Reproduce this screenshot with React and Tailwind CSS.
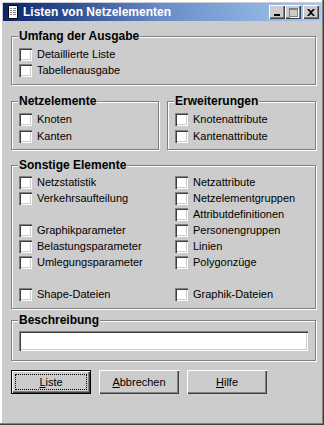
import React from 'react';

const font = { fontFamily: '"Liberation Sans", Arial, sans-serif' };

const Check = ({ label }) => (
  <div className="flex items-start h-full">
    <div className="w-[13px] h-[13px] shrink-0 bg-white shadow-[inset_1px_1px_0_#808080,inset_2px_2px_0_#404040,inset_-1px_-1px_0_#ffffff,inset_-2px_-2px_0_#cccccc]" />
    {label && <span className="ml-[5px] text-[11px] leading-[13px] text-black whitespace-nowrap">{label}</span>}
  </div>
);

const Group = ({ title, className = '', children }) => (
  <div className={`relative border border-[#808080] shadow-[inset_1px_1px_0_#fff,1px_1px_0_#fff] ${className}`}>
    <span className="absolute top-[-7px] left-[6px] px-[1px] bg-[#cccccc] text-[12px] leading-[12px] font-bold text-black whitespace-nowrap">
      {title}
    </span>
    {children}
  </div>
);

const Button = ({ children, isDefault }) => (
  <div className={`w-[80px] h-[24px] ${isDefault ? 'border border-black' : ''}`}>
    <div className="relative w-full h-full flex items-center justify-center text-[11px] text-black shadow-[inset_1px_1px_0_#fff,inset_-1px_-1px_0_#404040,inset_-2px_-2px_0_#808080]">
      {isDefault && <div className="absolute inset-[3px] border border-dotted border-black" />}
      <span>{children}</span>
    </div>
  </div>
);

const TitleButton = ({ children, className = '' }) => (
  <div className={`w-[16px] h-[14px] bg-[#cccccc] flex items-center justify-center shadow-[inset_1px_1px_0_#fff,inset_-1px_-1px_0_#404040,inset_-2px_-2px_0_#808080] ${className}`}>
    {children}
  </div>
);

const leftItems = [
  'Netzstatistik',
  'Verkehrsaufteilung',
  null,
  'Graphikparameter',
  'Belastungsparameter',
  'Umlegungsparameter',
  'empty',
  'Shape-Dateien',
];

const rightItems = [
  'Netzattribute',
  'Netzelementgruppen',
  'Attributdefinitionen',
  'Personengruppen',
  'Linien',
  'Polygonzüge',
  'empty',
  'Graphik-Dateien',
];

export default function App() {
  return (
    <div style={font} className="w-[324px] h-[425px] bg-[#cccccc] p-[3px] shadow-[inset_-1px_-1px_0_#404040,inset_-2px_-2px_0_#808080,inset_2px_2px_0_#fff] overflow-hidden">
      {/* title bar */}
      <div className="h-[18px] flex items-center bg-gradient-to-r from-[#0a246a] via-[#6a8cc8] to-[#a6caf0] pl-[5px] pr-[2px]">
        <svg width="10" height="14" viewBox="0 0 10 14" className="shrink-0">
          <rect x="0.5" y="0.5" width="9" height="13" fill="#fff" stroke="#000" />
          <rect x="2" y="3" width="2" height="1" fill="#808080" />
          <rect x="5" y="3" width="3" height="1" fill="#808080" />
          <rect x="2" y="5" width="2" height="1" fill="#808080" />
          <rect x="5" y="5" width="3" height="1" fill="#808080" />
          <rect x="2" y="7" width="2" height="1" fill="#808080" />
          <rect x="5" y="7" width="3" height="1" fill="#808080" />
          <rect x="2" y="9" width="2" height="1" fill="#808080" />
          <rect x="5" y="9" width="3" height="1" fill="#808080" />
        </svg>
        <span className="ml-[5px] text-[12px] font-bold text-white whitespace-nowrap">Listen von Netzelementen</span>
        <div className="ml-auto flex items-center">
          <TitleButton>
            <div className="w-[6px] h-[2px] bg-black mt-[6px] -ml-[1px]" />
          </TitleButton>
          <TitleButton>
            <div className="w-[9px] h-[9px] border border-[#808080] border-t-2 shadow-[1px_1px_0_#fff]" />
          </TitleButton>
          <TitleButton className="ml-[2px]">
            <svg width="8" height="7" viewBox="0 0 8 7">
              <path d="M0 0h2l2 2 2-2h2L5 3.5 8 7H6L4 5 2 7H0l3-3.5z" fill="#000" />
            </svg>
          </TitleButton>
        </div>
      </div>

      {/* content */}
      <div className="pl-[8px]">
        <Group title="Umfang der Ausgabe" className="mt-[15px] w-[305px] pt-[11px] pb-[4px] pl-[7px]">
          <div className="h-[16px]"><Check label="Detaillierte Liste" /></div>
          <div className="h-[16px]"><Check label="Tabellenausgabe" /></div>
        </Group>

        <div className="mt-[16px] flex gap-[8px]">
          <Group title="Netzelemente" className="w-[148px] pt-[11px] pb-[2px] pl-[7px]">
            <div className="h-[17px]"><Check label="Knoten" /></div>
            <div className="h-[17px]"><Check label="Kanten" /></div>
          </Group>
          <Group title="Erweiterungen" className="w-[149px] pt-[11px] pb-[2px] pl-[7px]">
            <div className="h-[17px]"><Check label="Knotenattribute" /></div>
            <div className="h-[17px]"><Check label="Kantenattribute" /></div>
          </Group>
        </div>

        <Group title="Sonstige Elemente" className="mt-[15px] w-[305px] pt-[10px] pb-[4px] pl-[7px]">
          <div className="grid grid-cols-[156px_1fr]">
            {leftItems.map((l, i) => (
              <React.Fragment key={i}>
                <div className="h-[16px]">{l && l !== 'empty' && <Check label={l} />}</div>
                <div className="h-[16px]">{rightItems[i] !== 'empty' && <Check label={rightItems[i]} />}</div>
              </React.Fragment>
            ))}
          </div>
        </Group>

        <Group title="Beschreibung" className="mt-[11px] w-[305px] pt-[10px] pb-[9px] pl-[7px]">
          <div className="w-[289px] h-[20px] bg-white shadow-[inset_1px_1px_0_#808080,inset_2px_2px_0_#404040,inset_-1px_-1px_0_#ffffff,inset_-2px_-2px_0_#cccccc]" />
        </Group>

        <div className="mt-[9px] flex gap-[8px]">
          <Button isDefault><span className="underline">L</span>iste</Button>
          <Button><span className="underline">A</span>bbrechen</Button>
          <Button><span className="underline">H</span>ilfe</Button>
        </div>
      </div>
    </div>
  );
}
